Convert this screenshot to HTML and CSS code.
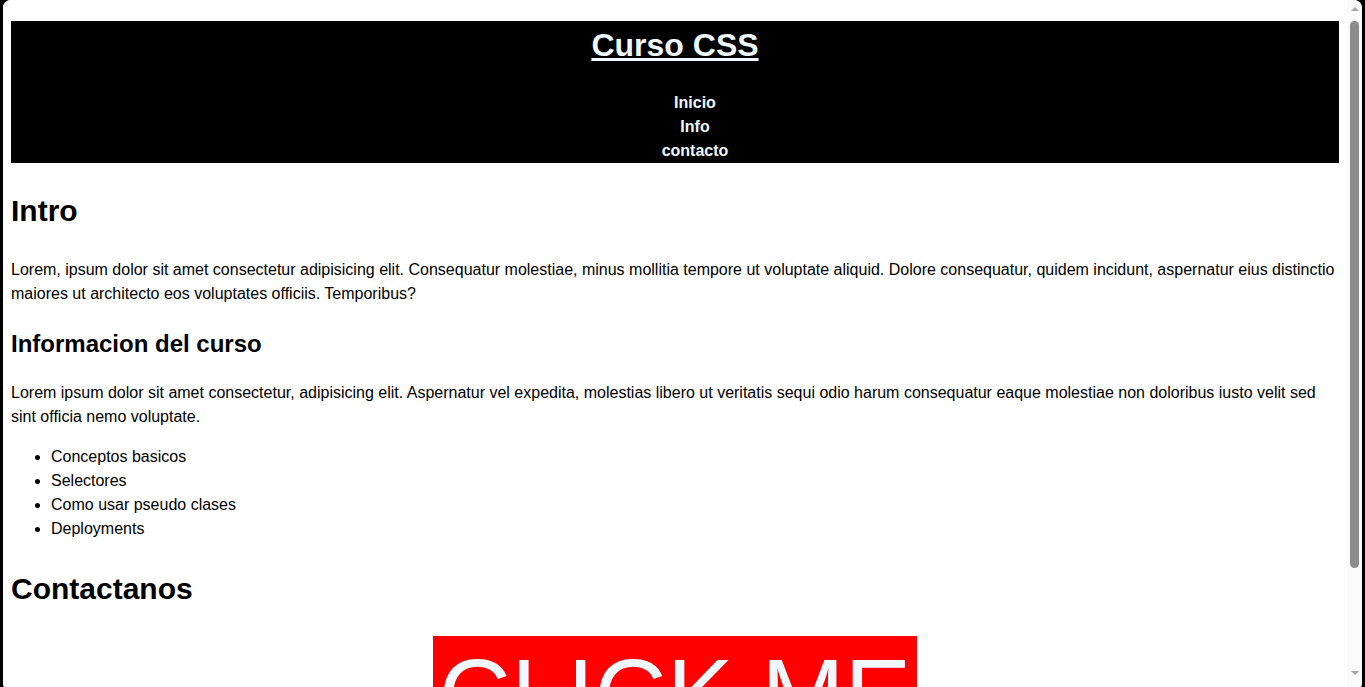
FILE: index.html
```html
<!DOCTYPE html>
<html lang="es">
<head>
<meta charset="utf-8">
<title>Curso CSS</title>
<link rel="stylesheet" href="styles.css">
</head>
<body>
<div class="window">
  <div class="viewport">
    <div class="page">
      <header class="top">
        <h1 class="title"><a href="#">Curso CSS</a></h1>
        <ul class="nav">
          <li><a href="#">Inicio</a></li>
          <li><a href="#">Info</a></li>
          <li><a href="#">contacto</a></li>
        </ul>
      </header>
      <section class="block">
        <h2 class="h-big">Intro</h2>
        <p class="text">Lorem, ipsum dolor sit amet consectetur adipisicing elit. Consequatur molestiae, minus mollitia tempore ut voluptate aliquid. Dolore consequatur, quidem incidunt, aspernatur eius distinctio maiores ut architecto eos voluptates officiis. Temporibus?</p>
        <h3 class="h-mid">Informacion del curso</h3>
        <p class="text">Lorem ipsum dolor sit amet consectetur, adipisicing elit. Aspernatur vel expedita, molestias libero ut veritatis sequi odio harum consequatur eaque molestiae non doloribus iusto velit sed sint officia nemo voluptate.</p>
        <ul class="topics">
          <li>Conceptos basicos</li>
          <li>Selectores</li>
          <li>Como usar pseudo clases</li>
          <li>Deployments</li>
        </ul>
      </section>
      <section class="block">
        <h2 class="h-big">Contactanos</h2>
        <div class="cta"><button class="cta-btn" type="button">CLICK ME</button></div>
      </section>
    </div>
  </div>
  <div class="scrollbar">
    <div class="arrow arrow-up"></div>
    <div class="track"><div class="thumb"></div></div>
    <div class="arrow arrow-down"></div>
  </div>
</div>
</body>
</html>
```
FILE: styles.css
```css
html, body {
  margin: 0;
  padding: 0;
  height: 100%;
  overflow: hidden;
  background: #000;
}

.window {
  display: flex;
  height: 691px;
  margin: 0 3px 0 3px;
  background: #fff;
  border-radius: 8px;
  overflow: hidden;
}

.viewport {
  flex: 1;
  overflow: hidden;
  background: #fff;
}

.page {
  margin: 8px;
  font-family: "Liberation Sans", Arial, sans-serif;
  font-size: 16px;
  line-height: 1.5;
  color: #000;
}

.top {
  background: #000;
  text-align: center;
}

.title {
  font-size: 32px;
  font-weight: bold;
  margin: 0.67em 0;
}

.title a {
  color: aliceblue;
  text-decoration: underline;
}

.nav {
  list-style: none;
  margin: 16px 0;
  padding-left: 40px;
  font-weight: bold;
}

.nav a {
  color: aliceblue;
  text-decoration: none;
}

.h-big {
  font-size: 30px;
  font-weight: bold;
  margin: 0.83em 0;
}

.h-mid {
  font-size: 24px;
  font-weight: bold;
  margin: 19.92px 0;
}

.text {
  margin: 16px 0;
}

.topics {
  margin: 16px 0;
  padding-left: 40px;
  list-style: disc;
}

.cta {
  text-align: center;
}

.cta-btn {
  font-family: "Liberation Sans", Arial, sans-serif;
  font-size: 100px;
  line-height: normal;
  padding: 1px 6px;
  border: none;
  background: #f00;
  color: aliceblue;
  cursor: pointer;
}

.scrollbar {
  width: 15px;
  background: #fafafa;
  display: flex;
  flex-direction: column;
  border-radius: 0 8px 8px 0;
}

.arrow {
  height: 17px;
  display: flex;
  align-items: center;
  justify-content: center;
}

.arrow-up::before {
  content: "";
  border-left: 4px solid transparent;
  border-right: 4px solid transparent;
  border-bottom: 4px solid #a3a3a3;
}

.arrow-down::before {
  content: "";
  border-left: 4px solid transparent;
  border-right: 4px solid transparent;
  border-top: 4px solid #a3a3a3;
}

.track {
  flex: 1;
  padding: 4px 3px 0 3px;
}

.thumb {
  height: 547px;
  background: #8c8c8c;
  border-radius: 5px;
}

.arrow-down {
  margin-bottom: 10px;
}
```
